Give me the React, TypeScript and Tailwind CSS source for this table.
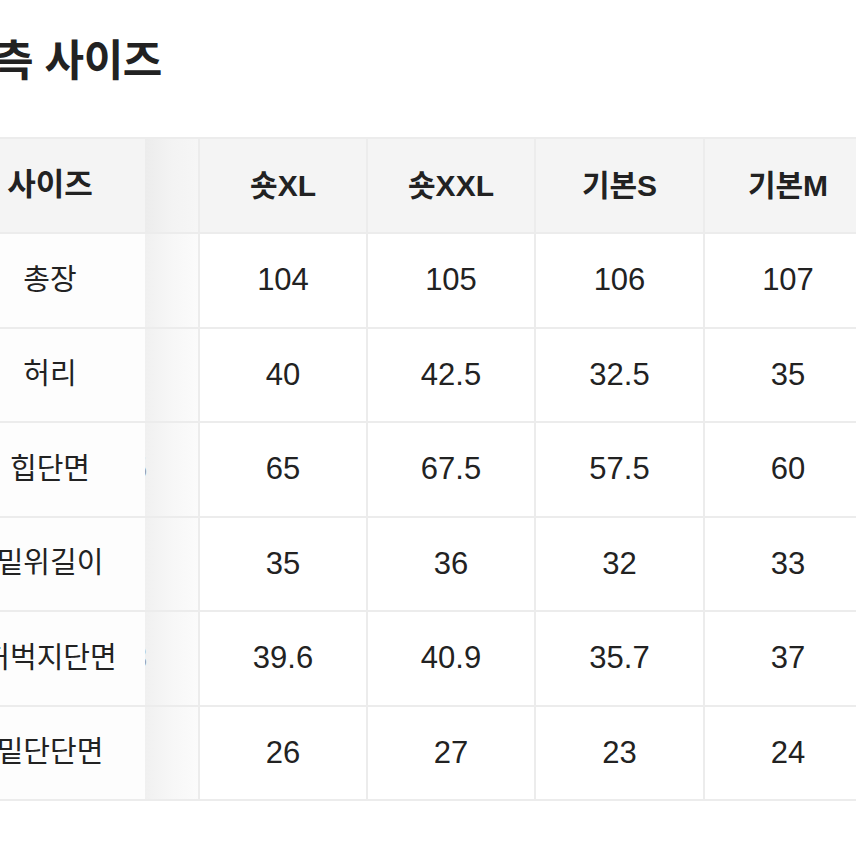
const columns = ["숏XL", "숏XXL", "기본S", "기본M", "기본L"];

const rows = [
  { label: "총장", values: ["104", "105", "106", "107", "108"], peek: "" },
  { label: "허리", values: ["40", "42.5", "32.5", "35", "37.5"], peek: "" },
  { label: "힙단면", values: ["65", "67.5", "57.5", "60", "62.5"], peek: "62.5" },
  { label: "밑위길이", values: ["35", "36", "32", "33", "34"], peek: "" },
  { label: "허벅지단면", values: ["39.6", "40.9", "35.7", "37", "38.3"], peek: "38.3" },
  { label: "밑단단면", values: ["26", "27", "23", "24", "25"], peek: "" },
];

const font = { fontFamily: '"Liberation Sans", "Noto Sans CJK KR", sans-serif' };

export default function App() {
  return (
    <div className="w-[856px] h-[856px] overflow-hidden bg-white text-[#222]" style={font}>
      <div className="-ml-[45px] w-[1100px]">
        <h2 className="pt-[30px] h-[137px] text-[43px] font-bold leading-[62px] tracking-[-0.5px] text-[#222]">
          실측 사이즈
        </h2>

        <div className="grid grid-cols-[190px_55px_168px_168px_169px_168px_168px] border-t-2 border-[#ececec]">
          {/* header */}
          <div className="h-[95px] flex items-center justify-center bg-[#f4f4f4] border-b-2 border-[#ececec] text-[31px] font-bold">
            사이즈
          </div>
          <div className="h-[95px] bg-gradient-to-r from-[#ececec] via-[#f3f3f3] to-[#f6f6f6] border-b-2 border-r-2 border-[#ececec]" />
          {columns.map((c) => (
            <div
              key={c}
              className="h-[95px] flex items-center justify-center bg-[#f4f4f4] border-b-2 border-r-2 border-[#ececec] text-[30px] font-bold"
            >
              {c}
            </div>
          ))}

          {rows.map((r) => (
            <div key={r.label} className="contents">
              <div className="h-[94.5px] flex items-center justify-center bg-[#fdfdfd] border-b-2 border-[#ececec] text-[29px] whitespace-nowrap">
                {r.label}
              </div>
              {/* column scrolled under the sticky one */}
              <div className="h-[94.5px] overflow-hidden flex items-center bg-gradient-to-r from-[#f0f0f0] via-[#f7f7f7] to-[#fbfbfb] border-b-2 border-r-2 border-[#ececec]">
                {r.peek && (
                  <span className="shrink-0 -ml-[58px] text-[31px] text-[#999]">{r.peek}</span>
                )}
              </div>
              {r.values.map((v, i) => (
                <div
                  key={i}
                  className="h-[94.5px] flex items-center justify-center bg-white border-b-2 border-r-2 border-[#ececec] text-[31px]"
                >
                  {v}
                </div>
              ))}
            </div>
          ))}
        </div>
      </div>
    </div>
  );
}
